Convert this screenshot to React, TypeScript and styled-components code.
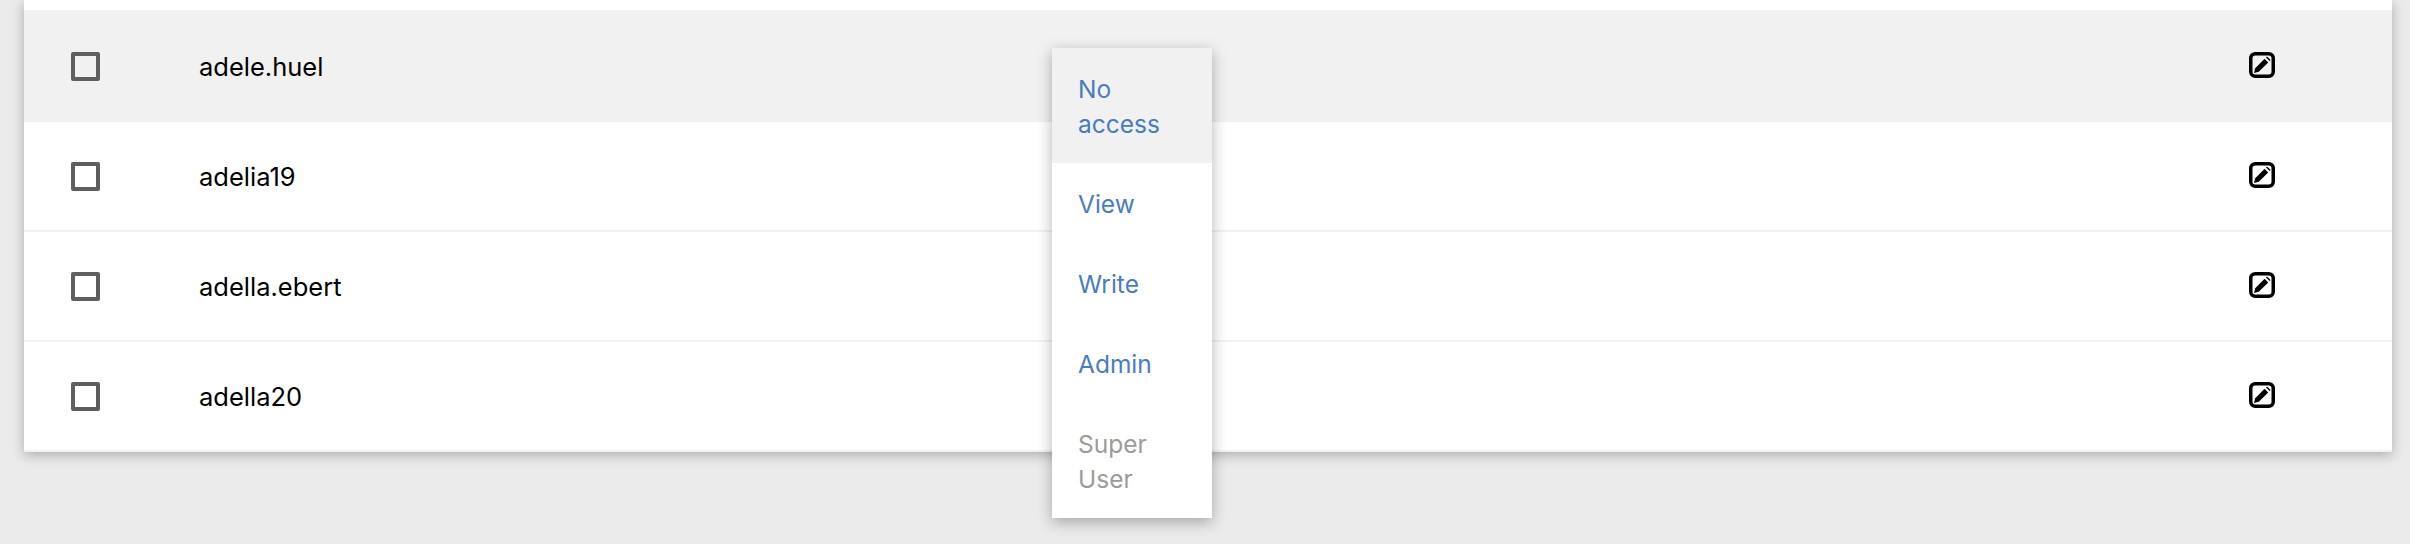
import React from "react";
import styled, { createGlobalStyle } from "styled-components";

const Global = createGlobalStyle`
  html, body { margin: 0; padding: 0; background: #ebebeb; overflow: hidden; }
  body { font-family: Inter, "Liberation Sans", sans-serif; }
`;

const Page = styled.div`
  position: relative;
  box-sizing: border-box;
  width: 2410px;
  height: 544px;
  padding: 0 18px 0 24px;
  background: #ebebeb;
`;

const Card = styled.div`
  background: #fff;
  box-shadow: 0 3px 12px rgba(0, 0, 0, 0.28);
`;

const TopStrip = styled.div`
  height: 10px;
  background: #fff;
  border-bottom: 2px solid #f1f1f1;
`;

const Row = styled.div<{ $active?: boolean }>`
  box-sizing: border-box;
  height: 110px;
  display: grid;
  grid-template-columns: 175px 1fr 143px;
  align-items: center;
  background: ${(p) => (p.$active ? "#f1f1f1" : "#fff")};
  border-bottom: 2px solid #f1f1f1;
`;

const CheckCell = styled.div`
  display: flex;
  padding-left: 47px;
`;

const Check = styled.span`
  box-sizing: border-box;
  display: block;
  width: 29px;
  height: 29px;
  border: 4px solid #5f5f5f;
  border-radius: 2px;
`;

const Name = styled.div`
  font-size: 25.5px;
  line-height: 35px;
  color: #000;
`;

const EditButton = styled.div`
  display: flex;
  margin-top: -3px;
`;

const Menu = styled.ul`
  position: absolute;
  left: 1052px;
  top: 48px;
  width: 160px;
  margin: 0;
  padding: 0;
  list-style: none;
  background: #fff;
  box-shadow: 0 4px 14px rgba(0, 0, 0, 0.3);
`;

const MenuItem = styled.li<{ $active?: boolean; $disabled?: boolean }>`
  padding: 24px 26px 21px;
  font-size: 24.5px;
  line-height: 35px;
  color: ${(p) => (p.$disabled ? "#9b9b9b" : "#4a7cc0")};
  background: ${(p) => (p.$active ? "#f1f1f1" : "transparent")};
`;

const EditIcon = () => (
  <svg width="26" height="26" viewBox="0 0 26 26" fill="none">
    <rect x="1.75" y="1.75" width="22.5" height="22.5" rx="4.5" stroke="#000" strokeWidth="3.5" />
    <path d="M5 21l1.2-4.8L15.6 6.8l3.6 3.6-9.4 9.4L5 21z" fill="#000" />
    <path d="M17 5.4l1-1 3.6 3.6-1 1z" fill="#000" />
  </svg>
);

const users = ["adele.huel", "adelia19", "adella.ebert", "adella20"];

export default function App() {
  return (
    <Page>
      <Global />
      <Card>
        <TopStrip />
        {users.map((u, i) => (
          <Row key={u} $active={i === 0}>
            <CheckCell>
              <Check />
            </CheckCell>
            <Name>{u}</Name>
            <EditButton>
              <EditIcon />
            </EditButton>
          </Row>
        ))}
      </Card>
      <Menu>
        <MenuItem $active>No access</MenuItem>
        <MenuItem>View</MenuItem>
        <MenuItem>Write</MenuItem>
        <MenuItem>Admin</MenuItem>
        <MenuItem $disabled>Super User</MenuItem>
      </Menu>
    </Page>
  );
}
